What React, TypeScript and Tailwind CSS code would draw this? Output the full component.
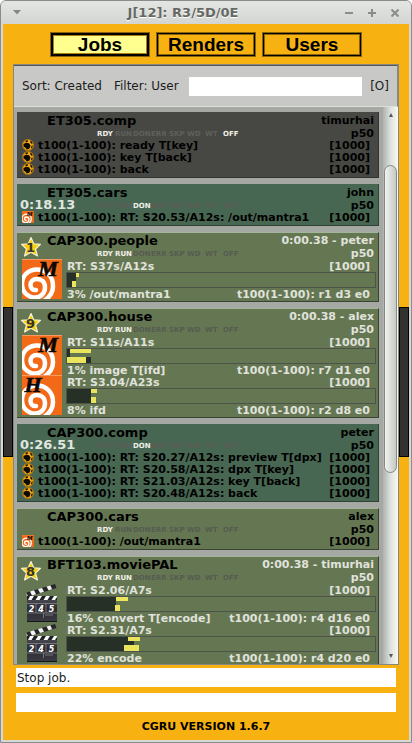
import React from "react";

type IconKind = "nuke" | "mantra" | "hbatch" | "movie";

type Segment = { x: number; y: number; w: number; h: number; done?: boolean };

type Block = {
  icon: IconKind;
  text: string;
  timing?: string;
  tasks?: string;
  segments?: Segment[];
};

type Job = {
  name: string;
  user: string;
  tone: "off" | "done" | "ready" | "run";
  states: string[];
  elapsed?: string;
  stars?: number;
  blocks: Block[];
};

const STATES = ["RDY", "RUN", "DON", "ERR", "SKP", "WD", "WT", "OFF"];

const JOBS: Job[] = [
  {
    name: "ET305.comp",
    user: "timurhai",
    tone: "off",
    states: ["RDY", "OFF"],
    blocks: [
      { icon: "nuke", text: "t100(1-100): ready T[key]" },
      { icon: "nuke", text: "t100(1-100): key T[back]" },
      { icon: "nuke", text: "t100(1-100): back" },
    ],
  },
  {
    name: "ET305.cars",
    user: "john",
    tone: "done",
    states: ["DON"],
    elapsed: "0:18.13",
    blocks: [{ icon: "mantra", text: "t100(1-100): RT: S20.53/A12s: /out/mantra1" }],
  },
  {
    name: "CAP300.people",
    user: "0:00.38 - peter",
    tone: "run",
    states: ["RDY", "RUN"],
    stars: 1,
    blocks: [
      {
        icon: "mantra",
        timing: "RT: S37s/A12s",
        text: "3% /out/mantra1",
        tasks: "t100(1-100): r1 d3 e0",
        segments: [
          { x: 0, y: 0, w: 9, h: 14, done: true },
          { x: 9, y: 0, w: 3, h: 4 },
          { x: 5, y: 8, w: 4, h: 6 },
        ],
      },
    ],
  },
  {
    name: "CAP300.house",
    user: "0:00.38 - alex",
    tone: "run",
    states: ["RDY", "RUN"],
    stars: 9,
    blocks: [
      {
        icon: "mantra",
        timing: "RT: S11s/A11s",
        text: "1% image T[ifd]",
        tasks: "t100(1-100): r7 d1 e0",
        segments: [
          { x: 0, y: 0, w: 3, h: 8, done: true },
          { x: 3, y: 0, w: 21, h: 4 },
          { x: 19, y: 8, w: 5, h: 6, done: true },
          { x: 0, y: 8, w: 19, h: 6 },
        ],
      },
      {
        icon: "hbatch",
        timing: "RT: S3.04/A23s",
        text: "8% ifd",
        tasks: "t100(1-100): r2 d8 e0",
        segments: [
          { x: 0, y: 0, w: 24, h: 14, done: true },
          { x: 24, y: 0, w: 6, h: 4 },
          { x: 24, y: 8, w: 5, h: 6 },
        ],
      },
    ],
  },
  {
    name: "CAP300.comp",
    user: "peter",
    tone: "done",
    states: ["DON"],
    elapsed: "0:26.51",
    blocks: [
      { icon: "nuke", text: "t100(1-100): RT: S20.27/A12s: preview T[dpx]" },
      { icon: "nuke", text: "t100(1-100): RT: S20.58/A12s: dpx T[key]" },
      { icon: "nuke", text: "t100(1-100): RT: S21.03/A12s: key T[back]" },
      { icon: "nuke", text: "t100(1-100): RT: S20.48/A12s: back" },
    ],
  },
  {
    name: "CAP300.cars",
    user: "alex",
    tone: "ready",
    states: ["RDY"],
    blocks: [{ icon: "mantra", text: "t100(1-100): /out/mantra1" }],
  },
  {
    name: "BFT103.moviePAL",
    user: "0:00.38 - timurhai",
    tone: "run",
    states: ["RDY", "RUN"],
    stars: 8,
    blocks: [
      {
        icon: "movie",
        timing: "RT: S2.06/A7s",
        text: "16% convert T[encode]",
        tasks: "t100(1-100): r4 d16 e0",
        segments: [
          { x: 0, y: 0, w: 49, h: 14, done: true },
          { x: 49, y: 0, w: 12, h: 4 },
          { x: 48, y: 8, w: 5, h: 6 },
        ],
      },
      {
        icon: "movie",
        timing: "RT: S2.31/A7s",
        text: "22% encode",
        tasks: "t100(1-100): r4 d20 e0",
        segments: [
          { x: 0, y: 0, w: 67, h: 14, done: true },
          { x: 61, y: 0, w: 12, h: 4 },
          { x: 57, y: 8, w: 15, h: 6 },
        ],
      },
    ],
  },
];

const TONES = {
  off: "bg-[#474844] border-[#333431] border-t-[#474844] text-black",
  done: "bg-[#486752] border-[#2f4236] border-t-[#486752] text-black",
  ready: "bg-[#657752] border-[#3a4434] border-t-[#a3b59b] text-black",
  run: "bg-[#657752] border-[#3a4434] border-t-[#a3b59b] text-[#e0e2dc]",
};

function Houdini({ letter, size }: { letter: "M" | "H"; size: string }) {
  return (
    <svg viewBox="0 0 40 40" className={`${size} block shrink-0`} aria-hidden="true">
      <rect width="40" height="40" fill="#f26a18" />
      <path
        d="M22 42C28 38 31 33 31 27C31 17 24 10.500 15 10.500C6 10.500 0 17 0 25C0 33 6 38.500 13 38.500C19 38.500 23 34 23 28.500C23 23 19.500 20 15 20C11 20 8.500 22.500 8.500 26C8.500 29.500 11 31.500 14 31"
        fill="none"
        stroke="#fff"
        strokeWidth="4.500"
        strokeLinecap="round"
      />
      <path d="M0 .5H40" stroke="#f59a63" />
      <text
        x={letter === "M" ? 26 : 11}
        y="17"
        textAnchor="middle"
        fontFamily="'Liberation Serif', serif"
        fontSize="22"
        fontWeight="700"
        fontStyle="italic"
        fill="#0b0706"
        stroke="#0b0706"
        strokeWidth="0.6"
      >
        {letter}
      </text>
    </svg>
  );
}

function Nuke() {
  return (
    <svg viewBox="0 0 12 12" className="block size-3 shrink-0" aria-hidden="true">
      <circle cx="6" cy="6" r="5.500" fill="#f0a618" stroke="#a8730f" strokeWidth="1" />
      <path d="M1.500 5L4 3.800L7 4.200L8.500 6.500L7.500 9.500L5 10.500L3.200 8.500L1.500 7.500Z" fill="#0d0a04" />
      <path d="M3.500 1.800L6 1.200L5.500 3L3.800 3.200Z" fill="#0d0a04" />
      <path d="M8 1.500L10 2.800L10.500 5L8.800 4.300Z" fill="#0d0a04" />
      <path d="M9.500 6.800L10.800 6.500L10 9L9 9.300Z" fill="#0d0a04" />
    </svg>
  );
}

function Clapper() {
  return (
    <svg viewBox="0 0 40 40" className="block size-10 shrink-0" aria-hidden="true">
      <defs>
        <linearGradient id="slate" x1="0" y1="0" x2="0" y2="1">
          <stop offset="0" stopColor="#53545c" />
          <stop offset="0.5" stopColor="#2a2b32" />
          <stop offset="1" stopColor="#3a3b43" />
        </linearGradient>
      </defs>
      <path d="M4.500 9.500L33 1L34.500 5L6 14Z" fill="#26272b" />
      <path d="M8 8.500L12 7.300L14 11.300L10 12.500ZM16 6L20 5L22 8.800L18 10ZM24.500 3.500L28.500 2.400L30 6.300L26.500 7.300ZM4.500 10L6 13.500L5 14Z" fill="#f4f4f4" />
      <rect x="5" y="13" width="30" height="26" fill="url(#slate)" />
      <rect x="5" y="13" width="30" height="4" fill="#1d1e22" />
      <path d="M8 13H12L9.500 17H6ZM16 13H20L17.500 17H13.500ZM24 13H28L25.500 17H21.500ZM32 13H35V14L33 17H29.500Z" fill="#f8f8f8" />
      <path d="M5 20.500H35M5 30H35M14 20V30M24 20V30M21.500 30V35M23 32H31" stroke="#85868c" strokeWidth="0.8" fill="none" />
      <path d="M5 38.500H35" stroke="#15161a" />
      <g fill="#fff" fontFamily="'DejaVu Sans', sans-serif" fontSize="8" fontWeight="700" fontStyle="italic" textAnchor="middle">
        <text x="9.500" y="28.500">2</text>
        <text x="19" y="28.500">4</text>
        <text x="29.500" y="28.500">5</text>
      </g>
    </svg>
  );
}

function Star({ value }: { value: number }) {
  return (
    <svg viewBox="0 0 22 22" className="block size-[22px]" role="img" aria-label={`Priority ${value}`}>
      <path
        d="M11 1.500L13.700 7.800L20.500 8.300L15.500 13L17.500 20L11 16.300L4.500 20L6.500 13L1.500 8.300L8.300 7.800Z"
        fill="#f8cc08"
        stroke="#f3efcf"
        strokeWidth="1.200"
        strokeLinejoin="round"
      />
      <text x="10.500" y="16" textAnchor="middle" fontFamily="'DejaVu Sans', sans-serif" fontSize="13" fontWeight="700" fill="#33352e">
        {value}
      </text>
    </svg>
  );
}

function BlockIcon({ kind, large }: { kind: IconKind; large: boolean }) {
  if (kind === "nuke") return <Nuke />;
  if (kind === "movie") return <Clapper />;
  return <Houdini letter={kind === "mantra" ? "M" : "H"} size={large ? "size-10" : "size-3"} />;
}

function BlockRow({ block }: { block: Block }) {
  if (!block.timing) {
    return (
      <div className="flex h-3 items-center gap-1 pr-2">
        <BlockIcon kind={block.icon} large={false} />
        <span className="flex-1 pt-0.5 leading-3">{block.text}</span>
        <span className="pt-0.5 leading-3">[1000]</span>
      </div>
    );
  }
  return (
    <div className="flex h-10 gap-1">
      <BlockIcon kind={block.icon} large />
      <div className="flex-1">
        <div className="flex h-[13px] justify-between pr-2 pl-px leading-4">
          <span>{block.timing}</span>
          <span>[1000]</span>
        </div>
        <div className="mr-0.5 h-4 border border-[#4d524a]">
          <svg className="block h-full w-full" aria-hidden="true">
            {block.segments?.map((s, i) => (
              <rect key={i} x={s.x} y={s.y} width={s.w} height={s.h} fill={s.done ? "#263026" : "#ebe55e"} />
            ))}
          </svg>
        </div>
        <div className="flex h-[11px] justify-between pr-2 pl-px leading-[13px]">
          <span>{block.text}</span>
          <span>{block.tasks}</span>
        </div>
      </div>
    </div>
  );
}

function JobCard({ job }: { job: Job }) {
  const dim = job.tone === "done" ? "text-[#5a5f58]" : job.tone === "off" ? "text-[#5f605c]" : "text-[#575b50]";
  return (
    <li className={`shrink-0 border-y border-r pb-0.5 pl-[5px] text-[11px] font-bold whitespace-nowrap ${TONES[job.tone]}`}>
      <div className="flex h-[26px] pr-1">
        <div className="relative flex-1 pl-[25px]">
          <h2 className="h-4 text-[13px] leading-4 text-black">{job.name}</h2>
          <div className="ml-[50px] flex text-[7px] leading-[10px]">
            {STATES.map((s) => (
              <span key={s} className={`w-[18px] ${job.states.includes(s) ? "text-[#f0f0e8]" : dim}`}>
                {s}
              </span>
            ))}
          </div>
          {job.elapsed && (
            <span className="absolute top-3 -left-0.5 text-[13px] leading-4 text-[#e0e6e0]">{job.elapsed}</span>
          )}
          {job.stars && (
            <span className="absolute top-[3px] -left-0.5">
              <Star value={job.stars} />
            </span>
          )}
        </div>
        <div className="pt-px text-right leading-[13px]">
          <div>{job.user}</div>
          <div>p50</div>
        </div>
      </div>
      {job.blocks.map((b, i) => (
        <BlockRow key={i} block={b} />
      ))}
    </li>
  );
}

function Handle() {
  return (
    <div className="flex w-2.5 shrink-0 items-center">
      <button aria-label="Toggle side panel" className="h-[150px] w-full border border-black bg-[#333230]" />
    </div>
  );
}

const TAB = "h-[25px] w-[100px] border border-[#8a640c] font-['Liberation_Sans',Arial,sans-serif] text-[19px] font-bold text-black";

export default function App() {
  return (
    <div className="flex h-screen flex-col overflow-hidden rounded-t-md border border-[#8b8b8b] bg-[#d6d8d5] font-['DejaVu_Sans',Verdana,sans-serif]">
      <header className="flex h-[23px] shrink-0 items-center bg-linear-to-b from-[#e4e6e3] to-[#d2d5d1] px-3">
        <button aria-label="Window menu" className="w-3 text-[#858783]">
          <svg viewBox="0 0 8 5" className="h-[5px] w-2">
            <path d="M0 0H8L4 4.500Z" fill="currentColor" />
          </svg>
        </button>
        <h1 className="flex-1 text-center text-[13px] leading-5 font-bold text-[#666864] [text-shadow:0_1px_0_#fff]">
          J[12]: R3/5D/0E
        </h1>
        <div className="flex w-[58px] justify-end gap-[15px] text-[#8a8c88]">
          <button aria-label="Minimize">
            <svg viewBox="0 0 8 8" className="size-2"><path d="M0 4H8" stroke="currentColor" strokeWidth="2" /></svg>
          </button>
          <button aria-label="Maximize">
            <svg viewBox="0 0 8 8" className="size-2"><path d="M0 4H8M4 0V8" stroke="currentColor" strokeWidth="2" /></svg>
          </button>
          <button aria-label="Close">
            <svg viewBox="0 0 8 8" className="size-2"><path d="M.5 .5L7.500 7.500M7.500 .5L.5 7.500" stroke="currentColor" strokeWidth="2" /></svg>
          </button>
        </div>
      </header>

      <div className="mx-0.5 mb-0.5 flex min-h-0 flex-1 bg-[#f7b212]">
        <Handle />
        <main className="flex min-w-0 flex-1 flex-col">
          <nav className="flex justify-center gap-1.5 pt-2 pb-[7px]">
            <button className={`${TAB} bg-black p-0.5`} aria-pressed="true">
              <span className="block border border-[#a5800f] bg-[#ffff90] leading-[17px]">Jobs</span>
            </button>
            <button className={`${TAB} bg-black p-px`}>
              <span className="block border border-[#8a640c] bg-[#f7b212] leading-[19px]">Renders</span>
            </button>
            <button className={`${TAB} bg-black p-px`}>
              <span className="block border border-[#8a640c] bg-[#f7b212] leading-[19px]">Users</span>
            </button>
          </nav>

          <section className="flex min-h-0 flex-1 flex-col border border-[#858783] bg-[#a6a8a4]">
            <div className="flex h-[42px] shrink-0 items-center border-t border-r border-b border-t-[#555753] border-r-[#858783] border-b-[#dcdedb] bg-[#c8c9c7] px-2 text-[12px] text-[#1c1c1c]">
              <button>Sort: Created</button>
              <label htmlFor="filter" className="ml-3">Filter: User</label>
              <input id="filter" className="ml-2.5 h-[19px] min-w-0 flex-1 bg-white px-1 outline-none" />
              <button className="ml-2">[O]</button>
            </div>
            <div className="flex min-h-0 flex-1">
              <ul className="flex min-w-0 flex-1 flex-col gap-1.5 overflow-hidden pt-[5px] pr-1 pl-[3px]">
                {JOBS.map((job) => (
                  <JobCard key={job.name} job={job} />
                ))}
              </ul>
              <div className="flex w-[15px] flex-col items-center bg-linear-to-r from-[#b0b2af] via-[#dfe1de] to-[#f8f9f7] py-1.5">
                <svg viewBox="0 0 4 4" className="size-1 shrink-0"><path d="M2 0L4 4H0Z" fill="#555" /></svg>
                <div className="mt-12 h-[308px] w-[13px] shrink-0 rounded-full border border-[#858783] bg-linear-to-r from-[#f2f3f1] to-[#c6c9c4]" />
                <div className="flex-1" />
                <svg viewBox="0 0 4 4" className="size-1 shrink-0"><path d="M0 0H4L2 4Z" fill="#555" /></svg>
              </div>
            </div>
          </section>

          <footer className="px-[3px] pt-[3px] text-center">
            <input aria-label="Status" readOnly value="Stop job." className="block h-[19px] w-full bg-white px-px text-[12px] text-[#1c1c1c] outline-none" />
            <input aria-label="Command" className="mt-1.5 block h-[19px] w-full bg-white px-px text-[12px] outline-none" />
            <p className="h-7 text-[11px] leading-[30px] font-bold text-black">CGRU VERSION 1.6.7</p>
          </footer>
        </main>
        <Handle />
      </div>
    </div>
  );
}
